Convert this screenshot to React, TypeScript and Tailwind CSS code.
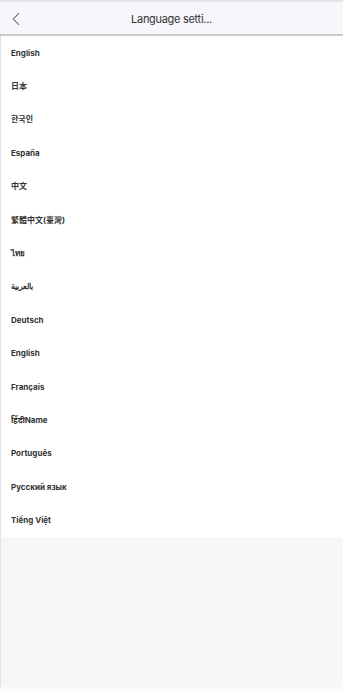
import { ChevronLeft } from 'lucide-react';

const languages = [
    'English',
    '日本',
    '한국인',
    'España',
    '中文',
    '繁體中文(臺灣)',
    'ไทย',
    'بالعربية',
    'Deutsch',
    'English',
    'Français',
    'हिंदीName',
    'Português',
    'Русский язык',
    'Tiếng Việt',
];

export default function App() {
    return (
        <div
            className="h-[691px] w-[343px] bg-[#f7f7fa] flex flex-col"
            style={{ fontFamily: 'Inter, "Noto Sans", "Noto Sans CJK SC", sans-serif' }}
        >
            <div className="h-[36px] shrink-0 border-t-2 border-[#e6e6ea] border-b-2 border-b-[#c9c9ce] bg-[#f7f7fb] flex items-center relative">
                <ChevronLeft className="absolute left-[5px] top-[6px] size-[22px] text-[#555]" strokeWidth={1.1} />
                <h1 className="w-full pt-[3px] text-center text-[11px] tracking-[-0.3px] text-[#333]">Language setti...</h1>
            </div>
            <div className="flex-1 border-l border-[#e2e2e6] flex flex-col">
                <ul className="bg-white">
                    {languages.map((lang, i) => (
                        <li key={i} className="h-[33.4px] flex items-center pl-[10px] text-[8px] font-bold text-[#333]">
                            {lang}
                        </li>
                    ))}
                </ul>
            </div>
            <div className="h-[4px] shrink-0 bg-[#fafafc]" />
        </div>
    );
}
